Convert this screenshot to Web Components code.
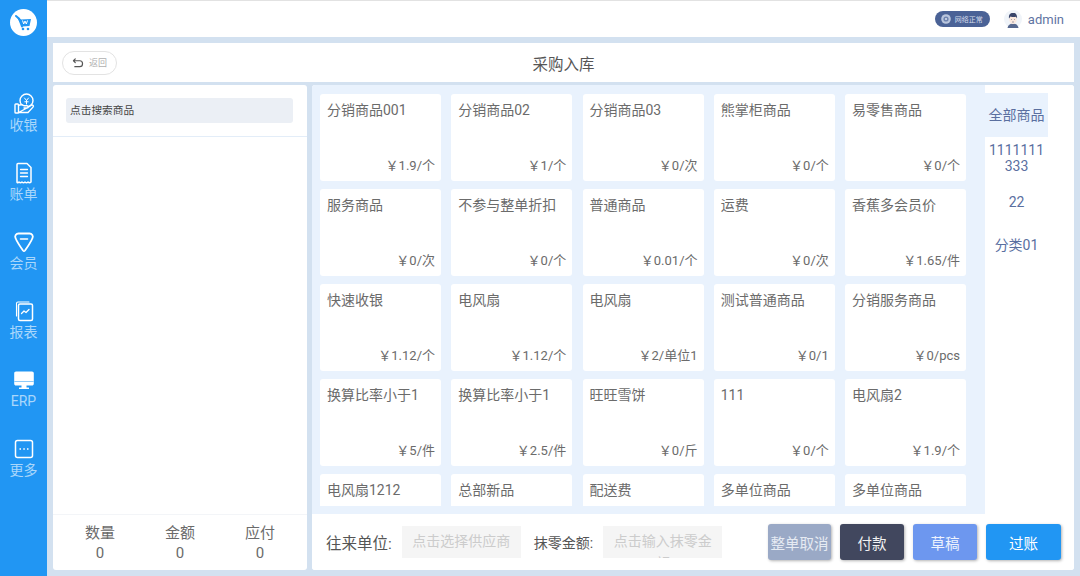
<!DOCTYPE html>
<html lang="zh">
<head>
<meta charset="utf-8">
<title>采购入库</title>
<style>
html, body { margin: 0; height: 100%; overflow: hidden; }
body { font-family: Roboto, "Noto Sans CJK SC", sans-serif; color: #666; }
</style>
</head>
<body>
<pos-app>
    <pos-sidebar slot="side">
        <nav-item label="收银">
            <svg viewBox="0 0 22 22" fill="none" stroke="#fff" stroke-width="1.4" stroke-linejoin="round" stroke-linecap="round">
                <circle cx="13.5" cy="7.5" r="6.5"/>
                <path d="M11.5 5l2 2.500 2-2.500M13.500 7.500v3.500M11.800 8.800h3.400" stroke-width="1"/>
                <rect x="2" y="11" width="3.500" height="9" rx=".8" fill="#2196f3"/>
                <path d="M5.500 12.500c2-1.200 4-.8 5.500.3h3c1.600 0 1.600 2.200 0 2.200h-3M14 15l4.500-2.800c1.300-.7 2.500.8 1.500 1.900l-5 5.400H5.500z" fill="#2196f3"/>
            </svg>
        </nav-item>
        <nav-item label="账单">
            <svg viewBox="0 0 22 22" fill="none" stroke="#fff" stroke-width="1.500" stroke-linejoin="round" stroke-linecap="round">
                <path d="M4 2.500c0-.6.4-1 1-1h9l4 4v14.500c-1 1-2 1-3 0-1 1-2 1-3 0-1 1-2 1-3 0-1 1-2 1-3 0-1 1-1.500.7-2 .3z"/>
                <path d="M7.500 7.500h7M7.500 11h7M7.500 14.500h7" stroke-width="1.300"/>
            </svg>
        </nav-item>
        <nav-item label="会员">
            <svg viewBox="0 0 22 22" fill="none" stroke="#fff" stroke-width="1.800" stroke-linejoin="round" stroke-linecap="round">
                <path d="M5.500 2.500h11c2.500 0 4 2.500 3 4.500-1.500 3.800-5 9-7.500 12.500-.6.700-1.400.700-2 0C7.500 16 4 10.800 2.500 7c-1-2 .5-4.500 3-4.500z"/>
                <path d="M7.500 8h7" stroke-width="1.600"/>
            </svg>
        </nav-item>
        <nav-item label="报表">
            <svg viewBox="0 0 22 22" fill="none" stroke="#fff" stroke-width="1.500" stroke-linejoin="round" stroke-linecap="round">
                <path d="M3.500 16V3.500c0-1 .5-1.500 1.500-1.500h11" stroke-width="1.100"/>
                <rect x="5.500" y="4" width="14" height="16.500" rx="1.500"/>
                <path d="M8.500 13.500l2.500-2.500 2 1.500 3-3" stroke-width="1.300"/>
            </svg>
        </nav-item>
        <nav-item label="ERP">
            <svg viewBox="0 0 22 22">
                <path fill="#fff" d="M3 2.500h16c1 0 1.800.8 1.800 1.800v10.400c0 1-.8 1.800-1.800 1.800h-5.500v2H16v1.500H6V18.500h2.500v-2H3c-1 0-1.800-.8-1.800-1.800V4.300c0-1 .8-1.800 1.800-1.800z"/>
                <path fill="#8fcbf9" d="M1.200 12h19.600v1H1.200z"/>
            </svg>
        </nav-item>
        <nav-item label="更多">
            <svg viewBox="0 0 22 22" fill="none" stroke="#fff" stroke-width="1.500">
                <rect x="2.500" y="2.500" width="17" height="17" rx="2"/>
                <path d="M6.500 11h1.500M10.300 11h1.500M14 11h1.500" stroke-width="1.600"/>
            </svg>
        </nav-item>
    </pos-sidebar>

    <top-bar slot="top"></top-bar>
    <page-header slot="header">采购入库</page-header>

    <order-panel slot="left"></order-panel>

    <product-grid slot="grid">
        <product-card price="￥1.9/个">分销商品001</product-card>
        <product-card price="￥1/个">分销商品02</product-card>
        <product-card price="￥0/次">分销商品03</product-card>
        <product-card price="￥0/个">熊掌柜商品</product-card>
        <product-card price="￥0/个">易零售商品</product-card>
        <product-card price="￥0/次">服务商品</product-card>
        <product-card price="￥0/个">不参与整单折扣</product-card>
        <product-card price="￥0.01/个">普通商品</product-card>
        <product-card price="￥0/次">运费</product-card>
        <product-card price="￥1.65/件">香蕉多会员价</product-card>
        <product-card price="￥1.12/个">快速收银</product-card>
        <product-card price="￥1.12/个">电风扇</product-card>
        <product-card price="￥2/单位1">电风扇</product-card>
        <product-card price="￥0/1">测试普通商品</product-card>
        <product-card price="￥0/pcs">分销服务商品</product-card>
        <product-card price="￥5/件">换算比率小于1</product-card>
        <product-card price="￥2.5/件">换算比率小于1</product-card>
        <product-card price="￥0/斤">旺旺雪饼</product-card>
        <product-card price="￥0/个">111</product-card>
        <product-card price="￥1.9/个">电风扇2</product-card>
        <product-card price="">电风扇1212</product-card>
        <product-card price="">总部新品</product-card>
        <product-card price="">配送费</product-card>
        <product-card price="">多单位商品</product-card>
        <product-card price="">多单位商品</product-card>
    </product-grid>

    <category-list slot="cats">
        <category-item active>全部商品</category-item>
        <category-item>1111111333</category-item>
        <category-item>22</category-item>
        <category-item>分类01</category-item>
    </category-list>

    <checkout-bar slot="bar">
        <action-button color="#9aa9c6" text="#e6ebf3" width="63">整单取消</action-button>
        <action-button color="#41475e" text="#f2f2f2" width="64">付款</action-button>
        <action-button color="#6d97ef" text="#eef3fd" width="64">草稿</action-button>
        <action-button color="#2196f3" text="#fff" width="75">过账</action-button>
    </checkout-bar>
</pos-app>

<script>
// small helper so every element below reads the same
function shadow(el, html) {
    el.attachShadow({ mode: 'open' }).innerHTML = html;
}

class PosApp extends HTMLElement {
    constructor() {
        super();
        shadow(this, `
        <style>
        :host {
            display: flex;
            width: 1080px;
            height: 576px;
            background-color: #d3e1f0;
        }
        .main {
            flex: 1;
            min-width: 0;
            display: flex;
            flex-direction: column;
        }
        .body {
            flex: 1;
            min-height: 0;
            display: flex;
            flex-direction: column;
            gap: 3px;
            padding: 6px 6px 6px 6px;
        }
        .row {
            flex: 1;
            min-height: 0;
            display: flex;
            gap: 5px;
        }
        .right {
            flex: 1;
            min-width: 0;
            display: flex;
            flex-direction: column;
            background-color: #fff;
            border-radius: 3px;
            overflow: hidden;
        }
        .shelf {
            flex: 1;
            min-height: 0;
            display: flex;
        }
        </style>
        <slot name="side"></slot>
        <div class="main">
            <slot name="top"></slot>
            <div class="body">
                <slot name="header"></slot>
                <div class="row">
                    <slot name="left"></slot>
                    <div class="right">
                        <div class="shelf">
                            <slot name="grid"></slot>
                            <slot name="cats"></slot>
                        </div>
                        <slot name="bar"></slot>
                    </div>
                </div>
            </div>
        </div>
        `);
    }
}

class PosSidebar extends HTMLElement {
    constructor() {
        super();
        shadow(this, `
        <style>
        :host {
            display: flex;
            flex-direction: column;
            align-items: center;
            width: 47px;
            height: 100%;
            background-color: #2196f3;
            flex: none;
        }
        .logo {
            width: 27px;
            height: 27px;
            margin-top: 9px;
            margin-bottom: 57px;
        }
        </style>
        <svg class="logo" viewBox="0 0 27 27">
            <circle cx="13.500" cy="13.500" r="13.500" fill="#fff"/>
            <path d="M6 7l3.500 2 1.500 1.500 10-.5-1.500 7-7 .5z" fill="#2196f3"/>
            <path d="M6 7l3 2.500 3 8" fill="none" stroke="#2196f3" stroke-width="2" stroke-linecap="round"/>
            <path d="M12.500 11.500l1.200 3.500 1.300-3 1.300 3 1.200-3.500" fill="none" stroke="#fff" stroke-width="1"/>
            <circle cx="13" cy="20" r="1.300" fill="#2196f3"/>
            <circle cx="18" cy="20" r="1.300" fill="#2196f3"/>
        </svg>
        <slot></slot>
        `);
    }
}

class NavItem extends HTMLElement {
    constructor() {
        super();
        shadow(this, `
        <style>
        :host {
            display: flex;
            flex-direction: column;
            align-items: center;
            height: 69px;
            width: 100%;
            color: #a9d7fb;
        }
        ::slotted(svg) {
            width: 22px;
            height: 22px;
        }
        span {
            font-size: 14px;
            line-height: 20px;
        }
        </style>
        <slot></slot>
        <span>${this.getAttribute('label')}</span>
        `);
    }
}

class TopBar extends HTMLElement {
    constructor() {
        super();
        shadow(this, `
        <style>
        :host {
            display: flex;
            align-items: center;
            justify-content: flex-end;
            height: 37px;
            box-sizing: border-box;
            background-color: #fff;
            border-top: 1px solid #e2e2e2;
            padding-right: 16px;
        }
        .net {
            display: flex;
            align-items: center;
            gap: 4px;
            width: 55px;
            height: 16px;
            box-sizing: border-box;
            padding-left: 6px;
            border-radius: 8px;
            background-color: #4a6296;
            color: #d5dceb;
            font-size: 7px;
            margin-right: 14px;
        }
        .net svg { width: 10px; height: 10px; flex: none; }
        .avatar {
            width: 18px;
            height: 18px;
            margin-right: 6px;
        }
        .name {
            font-size: 13px;
            color: #5f74a3;
        }
        </style>
        <div class="net">
            <svg viewBox="0 0 10 10">
                <circle cx="5" cy="5" r="4.800" fill="#b9c5dd"/>
                <circle cx="5" cy="5" r="2.600" fill="#6f84b0"/>
                <circle cx="5" cy="5" r="1.100" fill="#d5dceb"/>
            </svg>
            <span>网络正常</span>
        </div>
        <svg class="avatar" viewBox="0 0 18 18">
            <circle cx="9" cy="9" r="9" fill="#f0f4f9"/>
            <path d="M3.500 18c.5-3 2.500-4.500 5.500-4.500s5 1.500 5.500 4.500z" fill="#56688f"/>
            <ellipse cx="9" cy="9.500" rx="3.700" ry="4.600" fill="#fbe9de"/>
            <path d="M5 8.500C4.500 4.500 6.500 2.800 9 3c2.500-.5 4.500 1.500 4 5.500l-1-1.700c-2 .5-4 .3-5.500-.3z" fill="#39456a"/>
            <path d="M7.300 9.500h.6M10.100 9.500h.6M8.300 12h1.400" stroke="#39456a" stroke-width=".7"/>
        </svg>
        <span class="name">admin</span>
        `);
    }
}

class PageHeader extends HTMLElement {
    constructor() {
        super();
        shadow(this, `
        <style>
        :host {
            display: grid;
            grid-template-columns: 1fr auto 1fr;
            align-items: center;
            height: 39px;
            flex: none;
            background-color: #fff;
            padding: 0 9px;
        }
        .back {
            justify-self: start;
            display: flex;
            align-items: center;
            gap: 5px;
            width: 55px;
            height: 24px;
            box-sizing: border-box;
            padding-left: 9px;
            border: 1px solid #e3e3e3;
            border-radius: 12px;
            color: #b0b0b0;
            font-size: 9px;
        }
        .back svg { width: 12px; height: 10px; flex: none; }
        .title {
            font-size: 15.500px;
            color: #555;
        }
        </style>
        <div class="back">
            <svg viewBox="0 0 13 11" fill="none" stroke="#555" stroke-width="1.300" stroke-linecap="round" stroke-linejoin="round">
                <path d="M3.500 1L1.500 3l2 2M1.500 3h7c4 0 4 6.500 0 6.500H3"/>
            </svg>
            <span>返回</span>
        </div>
        <div class="title"><slot></slot></div>
        <div></div>
        `);
    }
}

class OrderPanel extends HTMLElement {
    constructor() {
        super();
        shadow(this, `
        <style>
        :host {
            display: flex;
            flex-direction: column;
            width: 254px;
            flex: none;
            background-color: #fff;
            border-radius: 3px;
        }
        .search {
            padding: 13px 14px 13px 13px;
            border-bottom: 1px solid #e3edf8;
        }
        .search div {
            height: 25px;
            line-height: 25px;
            padding-left: 4px;
            border-radius: 3px;
            background-color: #ebeff5;
            color: #444;
            font-size: 10.700px;
        }
        .list { flex: 1; }
        .sum {
            display: flex;
            height: 55px;
            padding: 0 7px;
            border-top: 1px solid #f3f5f8;
        }
        .sum div {
            flex: 1;
            text-align: center;
            font-size: 15px;
            line-height: 20px;
            padding-top: 8px;
            color: #6b6b6b;
        }
        .sum b {
            display: block;
            font-weight: normal;
            font-size: 15px;
        }
        </style>
        <div class="search"><div>点击搜索商品</div></div>
        <div class="list"></div>
        <div class="sum">
            <div>数量<b>0</b></div>
            <div>金额<b>0</b></div>
            <div>应付<b>0</b></div>
        </div>
        `);
    }
}

class ProductGrid extends HTMLElement {
    constructor() {
        super();
        shadow(this, `
        <style>
        :host {
            display: block;
            box-sizing: border-box;
            width: 673px;
            flex: none;
            height: 100%;
            padding: 9px 0 8px 8px;
            background-color: #e9f2fd;
        }
        .scroll {
            display: grid;
            grid-template-columns: repeat(5, 121px);
            grid-auto-rows: 87px;
            column-gap: 10.250px;
            row-gap: 8px;
            height: 100%;
            overflow: hidden;
        }
        </style>
        <div class="scroll"><slot></slot></div>
        `);
    }
}

class ProductCard extends HTMLElement {
    constructor() {
        super();
        shadow(this, `
        <style>
        :host {
            display: flex;
            flex-direction: column;
            justify-content: space-between;
            box-sizing: border-box;
            padding: 8px 6px 7px 7px;
            background-color: #fff;
            border-radius: 3px;
            color: #6b6b6b;
        }
        .name {
            font-size: 14px;
            line-height: 16px;
        }
        .price {
            align-self: flex-end;
            font-size: 13px;
            line-height: 16px;
        }
        </style>
        <div class="name"><slot></slot></div>
        <div class="price">${this.getAttribute('price')}</div>
        `);
    }
}

class CategoryList extends HTMLElement {
    constructor() {
        super();
        shadow(this, `
        <style>
        :host {
            display: flex;
            flex-direction: column;
            flex: 1;
            padding-top: 8px;
            background-color: #fff;
        }
        </style>
        <slot></slot>
        `);
    }
}

class CategoryItem extends HTMLElement {
    constructor() {
        super();
        shadow(this, `
        <style>
        :host {
            display: flex;
            align-items: center;
            justify-content: center;
            box-sizing: border-box;
            width: 63px;
            height: 43.500px;
            padding: 0 3px;
            text-align: center;
            word-break: break-all;
            font-size: 14px;
            line-height: 16px;
            color: #5a6f9f;
        }
        :host([active]) {
            background-color: #e9f2fd;
        }
        </style>
        <span><slot></slot></span>
        `);
    }
}

class CheckoutBar extends HTMLElement {
    constructor() {
        super();
        shadow(this, `
        <style>
        :host {
            display: flex;
            align-items: center;
            flex: none;
            height: 56px;
            box-sizing: border-box;
            padding: 0 13px 0 14px;
            background-color: #fff;
            color: #555;
        }
        .field {
            width: 119px;
            height: 32px;
            margin: 0 13px 0 10px;
            padding: 4px 6px 0;
            box-sizing: border-box;
            overflow: hidden;
            background-color: #f5f5f5;
            color: #ccc;
            font-size: 14px;
            line-height: 22px;
            text-align: center;
            flex: none;
        }
        .second {
            margin: 0 0 0 10px;
        }
        label { flex: none; font-size: 15.500px; }
        label.small { font-size: 14px; }
        .actions {
            margin-left: auto;
            display: flex;
            gap: 9px;
        }
        </style>
        <label>往来单位:</label>
        <div class="field">点击选择供应商</div>
        <label class="small">抹零金额:</label>
        <div class="field second">点击输入抹零金额</div>
        <div class="actions"><slot></slot></div>
        `);
    }
}

class ActionButton extends HTMLElement {
    constructor() {
        super();
        shadow(this, `
        <style>
        :host {
            display: flex;
            align-items: center;
            justify-content: center;
            width: ${this.getAttribute('width')}px;
            height: 36px;
            border-radius: 3px;
            background-color: ${this.getAttribute('color')};
            color: ${this.getAttribute('text')};
            font-size: 14.500px;
            white-space: nowrap;
            box-shadow: 1px 1px 3px rgba(0, 0, 0, 0.3);
        }
        </style>
        <slot></slot>
        `);
    }
}

customElements.define('pos-app', PosApp);
customElements.define('pos-sidebar', PosSidebar);
customElements.define('nav-item', NavItem);
customElements.define('top-bar', TopBar);
customElements.define('page-header', PageHeader);
customElements.define('order-panel', OrderPanel);
customElements.define('product-grid', ProductGrid);
customElements.define('product-card', ProductCard);
customElements.define('category-list', CategoryList);
customElements.define('category-item', CategoryItem);
customElements.define('checkout-bar', CheckoutBar);
customElements.define('action-button', ActionButton);
</script>
</body>
</html>
